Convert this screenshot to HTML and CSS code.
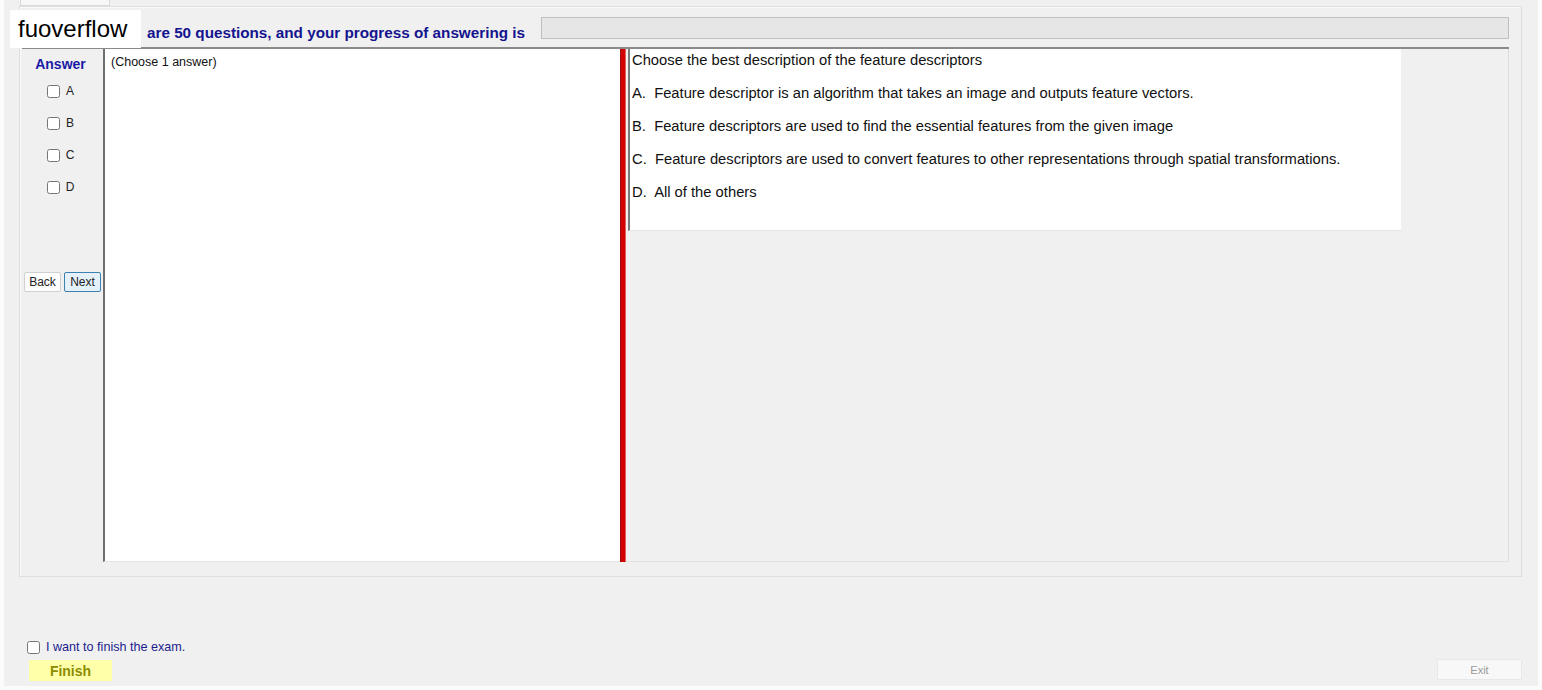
FILE: index.html
```html
<!DOCTYPE html>
<html lang="en">
<head>
    <meta charset="UTF-8">
    <title>Exam</title>
    <link rel="stylesheet" href="styles.css">
</head>
<body>
    <div class="window">
        <div class="tab-row"><span class="tab"></span></div>
        <div class="group">
            <div class="head">
                <span class="mark">fuoverflow</span>
                <span class="head-text">are 50 questions, and your progress of answering is</span>
                <div class="progress"></div>
            </div>
            <div class="panel">
                <div class="answers">
                    <div class="answer-title">Answer</div>
                    <label class="opt"><input type="checkbox"> A</label>
                    <label class="opt"><input type="checkbox"> B</label>
                    <label class="opt"><input type="checkbox"> C</label>
                    <label class="opt"><input type="checkbox"> D</label>
                    <div class="nav">
                        <button class="btn">Back</button>
                        <button class="btn next">Next</button>
                    </div>
                </div>
                <div class="notes">(Choose 1 answer)</div>
                <div class="splitter"></div>
                <div class="question-area">
                    <div class="question">
                        <p>Choose the best description of the feature descriptors</p>
                        <p>A.&nbsp; Feature descriptor is an algorithm that takes an image and outputs feature vectors.</p>
                        <p>B.&nbsp; Feature descriptors are used to find the essential features from the given image</p>
                        <p>C.&nbsp; Feature descriptors are used to convert features to other representations through spatial transformations.</p>
                        <p>D.&nbsp; All of the others</p>
                    </div>
                </div>
            </div>
        </div>
        <div class="bottom">
            <div class="finish-side">
                <label class="confirm"><input type="checkbox"> I want to finish the exam.</label>
                <button class="finish">Finish</button>
            </div>
            <button class="exit">Exit</button>
        </div>
    </div>
</body>
</html>
```

FILE: styles.css
```css
body {
    margin: 0;
    background: #fbfbfb;
    font-family: "Liberation Sans", Arial, sans-serif;
}
.window {
    width: 1534px;
    height: 686px;
    margin-left: 4px;
    background: #f0f0f0;
    display: flex;
    flex-direction: column;
}
.tab-row {
    height: 6px;
    padding-left: 16px;
}
.tab {
    display: block;
    width: 90px;
    height: 6px;
    box-sizing: border-box;
    background: #f7f7f7;
    border: 1px solid #dadada;
    border-top: none;
}
.group {
    margin-left: 15px;
    width: 1503px;
    height: 571px;
    box-sizing: border-box;
    border: 1px solid #dedede;
    box-shadow: inset 1px 1px #fafafa;
    padding: 0 12px 14px 2px;
    display: flex;
    flex-direction: column;
}
.head {
    height: 40px;
    display: flex;
    align-items: center;
    position: relative;
}
/* site watermark pasted over the start of the heading */
.mark {
    position: absolute;
    left: -12px;
    top: 3px;
    background: #fff;
    padding: 7px 14px 7px 8px;
    font-size: 24px;
    line-height: 24px;
    color: #000;
}
.head-text {
    margin-left: 125px;
    margin-top: 11px;
    font-size: 15.25px;
    font-weight: bold;
    color: #14148f;
}
.progress {
    margin-left: 16px;
    flex: 1;
    height: 22px;
    margin-top: 1px;
    box-sizing: border-box;
    background: #e6e6e6;
    border: 1px solid #bfbfbf;
}
.panel {
    flex: 1;
    display: flex;
    border-top: 2px solid #8a8a8a;
}
.answers {
    width: 81px;
    box-sizing: border-box;
    padding-right: 4px;
    display: flex;
    flex-direction: column;
    align-items: center;
    font-size: 12px;
}
.answer-title {
    margin-top: 7px;
    margin-bottom: 3px;
    font-size: 14px;
    font-weight: bold;
    color: #1a1aa6;
}
.opt {
    display: flex;
    align-items: center;
    height: 32px;
    color: #222;
    gap: 6px;
}
.opt input {
    width: 13px;
    height: 13px;
    margin: 0;
}
.nav {
    margin-top: 69px;
    margin-left: 4px;
    display: flex;
    gap: 3px;
}
.btn {
    font-family: inherit;
    font-size: 12px;
    padding: 0;
    width: 37px;
    height: 20px;
    background: #fdfdfd;
    border: 1px solid #d0d0d0;
    border-radius: 2px;
    color: #222;
}
.btn.next {
    background: #e4f1fb;
    border-color: #3c7fb1;
}
.notes {
    width: 517px;
    box-sizing: border-box;
    background: #fff;
    border-left: 2px solid #6f6f6f;
    border-bottom: 1px solid #e4e4e4;
    padding: 6px 6px;
    font-size: 12.5px;
    color: #111;
}
.splitter {
    width: 4px;
    background: #d20000;
    border-left: 1px solid #9a1010;
    border-right: 1px solid #e36060;
}
.question-area {
    flex: 1;
    padding: 0 107px 0 2px;
    border-right: 1px solid #dcdcdc;
    border-bottom: 1px solid #e2e2e2;
}
.question {
    height: 182px;
    box-sizing: border-box;
    background: #fff;
    border-left: 2px solid #7a7a7a;
    border-bottom: 1px solid #e4e4e4;
    padding: 2px 2px;
}
.question p {
    margin: 0 0 14px;
    font-size: 14.75px;
    line-height: 19px;
    color: #111;
}
.bottom {
    flex: 1;
    display: flex;
    justify-content: space-between;
    align-items: flex-end;
    padding: 0 16px 5px 23px;
}
.finish-side {
    display: flex;
    flex-direction: column;
    align-items: flex-start;
}
.confirm {
    display: flex;
    align-items: center;
    gap: 6px;
    font-size: 12.6px;
    color: #1c1c8e;
}
.confirm input {
    width: 13px;
    height: 13px;
    margin: 0;
}
.finish {
    margin: 6px 0 0 2px;
    width: 83px;
    height: 21px;
    border: none;
    background: #ffffaa;
    color: #8c8c00;
    font-family: inherit;
    font-weight: bold;
    font-size: 14px;
    padding: 0;
}
.exit {
    width: 85px;
    height: 21px;
    margin-bottom: 1px;
    border: 1px solid #e8e8e8;
    background: #f8f8f8;
    color: #9a9a9a;
    font-family: inherit;
    font-size: 11px;
    padding: 0;
}
```
